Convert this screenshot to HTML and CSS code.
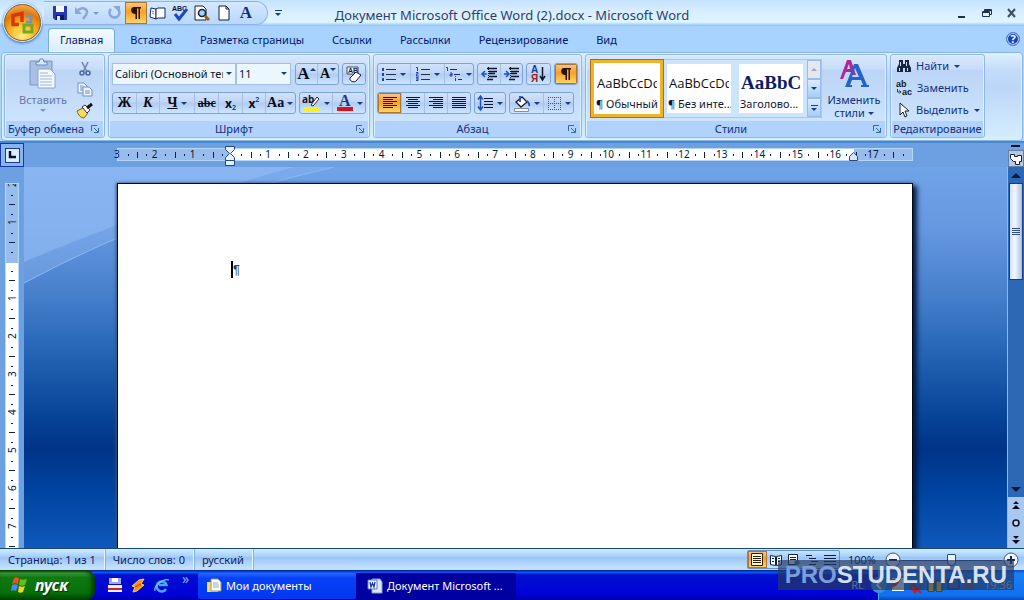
FILE: index.html
```html
<!DOCTYPE html>
<html lang="ru">
<head>
<meta charset="utf-8">
<title>Документ Microsoft Office Word (2).docx - Microsoft Word</title>
<link rel="stylesheet" href="styles.css">
</head>
<body>
<header class="titlebar">
  <div class="qat-area">
    <div class="qat">
      <button class="ib" aria-label="Сохранить"><svg width="16" height="16"><path d="M1 1h14v14H3l-2-2z" fill="#2a35b0"/><path d="M4 1h8v6H4z" fill="#f4f8ff"/><path d="M4 10h8v5H4z" fill="#101868"/><path d="M5 11h3v4H5z" fill="#dfe8fa"/></svg></button>
      <button class="ib" aria-label="Отменить"><svg width="16" height="16"><path d="M4 5c6-4 11 0 8 5l-3 4" fill="none" stroke="#8ba6d8" stroke-width="2.5"/><path d="M1 2v7h7z" fill="#8ba6d8"/></svg></button>
      <span class="caret pale"></span>
      <button class="ib" aria-label="Вернуть"><svg width="16" height="16"><path d="M12 4a5 5 0 1 1-7 0" fill="none" stroke="#8ba6d8" stroke-width="2.5"/><path d="M7 1h7v7z" fill="#8ba6d8"/></svg></button>
      <button class="ib on" aria-label="Непечатаемые знаки"><svg width="16" height="16"><path d="M6 2h7v1.500h-1V14h-1.500V3.500H9V14H7.500V9C2 9 2 2 6 2z" fill="#281400"/></svg></button>
      <button class="ib" aria-label="Режим чтения"><svg width="18" height="16"><path d="M2 3l5 1v10l-6-2z" fill="#fff" stroke="#182858"/><path d="M9 3h7v10H9l-2 1V4z" fill="#fff" stroke="#182858"/><path d="M3 6l2 1M3 8l2 1" stroke="#6880b0"/></svg></button>
      <button class="ib" aria-label="Орфография"><svg width="18" height="18"><text x="1" y="7" class="t-abc">ABC</text><path d="M4 10l4 5 8-10" fill="none" stroke="#1c48c8" stroke-width="3"/></svg></button>
      <button class="ib" aria-label="Просмотр"><svg width="18" height="16"><path d="M2 1h8l3 3v11H2z" fill="#fff" stroke="#182038"/><circle cx="9" cy="8" r="3.500" fill="#a8d0f0" stroke="#182038" stroke-width="1.500"/><path d="M12 11l4 4" stroke="#a06010" stroke-width="3"/></svg></button>
      <button class="ib" aria-label="Создать"><svg width="14" height="16"><path d="M2 1h7l3 3v11H2z" fill="#fff" stroke="#182038"/><path d="M9 1v3h3" fill="none" stroke="#182038"/></svg></button>
      <button class="ib glyph-a">A</button>
    </div>
    <button class="more" aria-label="Настройка панели"><span class="bar"></span><span class="caret"></span></button>
  </div>
  <h1 class="title">Документ Microsoft Office Word (2).docx - Microsoft Word</h1>
  <div class="winbtns">
    <button aria-label="Свернуть"><svg width="12" height="12"><path d="M2 9h7v2H2z" fill="#203050"/></svg></button>
    <button aria-label="Восстановить"><svg width="12" height="12"><path d="M3.500 4V2.500h7v5H9M1.500 4.500h7v5h-7zM1.500 5.500h7M3 3.500h7" fill="none" stroke="#203050"/></svg></button>
    <button aria-label="Закрыть"><svg width="12" height="12"><path d="M2 2l7 8M9 2l-7 8" stroke="#405068" stroke-width="2.200"/></svg></button>
  </div>
  <button class="office" aria-label="Office"><svg width="26" height="26"><path d="M12 12V3.500l-9 2v9h6" fill="none" stroke="#d83808" stroke-width="3.500"/><path d="M15 6h6v6h-5" fill="none" stroke="#7090c8" stroke-width="2.500"/><path d="M10 15v7H5v-4" fill="none" stroke="#f8d040" stroke-width="2.500"/><path d="M14 15h8v7h-8z" fill="none" stroke="#78a820" stroke-width="3"/></svg></button>
</header>
<nav class="tabs">
  <button class="tab active">Главная</button><button class="tab">Вставка</button><button class="tab">Разметка страницы</button><button class="tab">Ссылки</button><button class="tab">Рассылки</button><button class="tab">Рецензирование</button><button class="tab">Вид</button>
  <button class="help" aria-label="Справка">?</button>
</nav>
<div class="ribbon">
  <section class="group g-clip">
    <div class="body clip">
      <button class="big paste"><svg width="28" height="32"><path d="M1 3h22v24H1z" fill="#a8c0e4" stroke="#7898c8"/><path d="M7 4h3l1-3h3l1 3h3v3H7z" fill="#dce8fa" stroke="#6888b8"/><path d="M9 11h12l5 5v14H9z" fill="#f4f9ff" stroke="#88a4d0"/><path d="M11 15h8M11 18h12M11 21h12M11 24h12M11 27h12" stroke="#98b4dc"/></svg><span>Вставить</span><i class="caret pale"></i></button>
      <div class="col">
        <button class="ib" aria-label="Вырезать"><svg width="14" height="16"><path d="M4 1l5 10M10 1L5 11" stroke="#6f88b4" stroke-width="1.600"/><circle cx="4" cy="12" r="2" fill="none" stroke="#5068a0" stroke-width="1.600"/><circle cx="10" cy="12" r="2" fill="none" stroke="#5068a0" stroke-width="1.600"/></svg></button>
        <button class="ib" aria-label="Копировать"><svg width="16" height="15"><path d="M1 1h6l3 3v7H1z" fill="#eef5ff" stroke="#7090c0"/><path d="M3 4h3M3 6h3M3 8h3" stroke="#7090c0"/><path d="M6 5h6l3 3v6H6z" fill="#eef5ff" stroke="#7090c0"/><path d="M8 9h5M8 11h5" stroke="#7090c0"/></svg></button>
        <button class="ib" aria-label="Формат по образцу"><svg width="18" height="16"><path d="M1 8l6-3 5 5-4 5c-3 0-6-3-7-7z" fill="#f8dc58" stroke="#806010"/><path d="M6 4l3-2 5 5-3 3z" fill="#fff" stroke="#303040"/><path d="M11 5l5-4" stroke="#181818" stroke-width="3"/></svg></button>
      </div>
    </div>
    <footer><span>Буфер обмена</span><button class="launch" aria-label="Буфер обмена"><svg width="8" height="8"><path d="M.5 6V.5H6M7.500 3v4.500H3M3 3l4 4" fill="none" stroke="#3868a8"/></svg></button></footer>
  </section>

  <section class="group g-font">
    <div class="body rows">
      <div class="row">
        <div class="combos">
          <label class="combo name"><select aria-label="Шрифт"><option>Calibri (Основной текст)</option></select><i class="caret"></i></label>
          <label class="combo size"><select aria-label="Размер шрифта"><option>11</option></select><i class="caret"></i></label>
        </div>
        <div class="set"><button class="w22 serif s16" aria-label="Увеличить">A<i class="caret up sup"></i></button><button class="w22 serif s13" aria-label="Уменьшить">A<i class="caret sup"></i></button></div>
        <div class="set"><button class="w24" aria-label="Очистить формат"><svg width="18" height="17"><path d="M2 1h11v7H2z" fill="#fff" stroke="#384878"/><text x="3" y="7" class="t-aa">AB</text><path d="M5 12l6-6 5 3-5 6c-2 2-7 0-6-3z" fill="#fff" stroke="#182038"/></svg></button></div>
      </div>
      <div class="row">
        <div class="set"><button class="w22 serif">Ж</button><button class="w22 serif it">К</button><button class="w36 serif"><u>Ч</u><i class="caret"></i></button><button class="w24 serif s12"><s>abc</s></button><button class="w24 sansb">x<sub>2</sub></button><button class="w22 sansb">x<sup>2</sup></button><button class="w30 serif">Aa<i class="caret"></i></button></div>
        <div class="set"><button class="w33" aria-label="Выделение цветом"><svg width="19" height="18"><text x="0" y="9" class="t-ab">ab</text><path d="M9 11l6-8 2 2-6 7z" fill="#fff" stroke="#202838"/><path d="M1 13h16v4H1z" fill="#f8f020"/></svg><i class="caret"></i></button><button class="w33" aria-label="Цвет текста"><svg width="18" height="18"><text x="3" y="12" class="t-a">A</text><path d="M1 13h16v4H1z" fill="#d81020"/></svg><i class="caret"></i></button></div>
      </div>
    </div>
    <footer><span>Шрифт</span><button class="launch" aria-label="Шрифт"><svg width="8" height="8"><path d="M.5 6V.5H6M7.500 3v4.500H3M3 3l4 4" fill="none" stroke="#3868a8"/></svg></button></footer>
  </section>

  <section class="group g-para">
    <div class="body rows">
      <div class="row">
        <div class="set"><button class="w33" aria-label="Маркеры"><svg width="16" height="16"><path d="M5 3.500h10M5 8.500h10M5 13.500h10" stroke="#283048"/><path d="M1 2h2v3H1zM1 7h2v3H1zM1 12h2v3H1z" fill="#2440b0"/></svg><i class="caret"></i></button><button class="w34" aria-label="Нумерация"><svg width="16" height="16"><path d="M6 3.500h9M6 8.500h9M6 13.500h9" stroke="#283048"/><path d="M1 1.500h1.500V5M1 6.500h2v1.500H1.500V10H4M1 11.500h2v3H1M1 13h2" fill="none" stroke="#2440b0"/></svg><i class="caret"></i></button><button class="w30" aria-label="Многоуровневый список"><svg width="18" height="16"><path d="M5 3.500h7M9 8.500h6M13 13.500h4" stroke="#283048"/><path d="M1 1.500h1.500V5M5 7h2v3H5V8.500h2M10.500 10v1M10.500 12v3" fill="none" stroke="#2440b0"/></svg><i class="caret"></i></button></div>
        <div class="set"><button class="w22" aria-label="Уменьшить отступ"><svg width="17" height="16"><path d="M6 2.500h10M8 5.500h8M8 7.500h6M8 10.500h8M6 13.500h6" stroke="#10182c" stroke-width="1.300"/><path d="M1 8h5M4 5L1 8l3 3" fill="none" stroke="#2050c0" stroke-width="1.500"/><path d="M7.500 1v14" stroke="#10182c" stroke-dasharray="1"/></svg></button><button class="w22" aria-label="Увеличить отступ"><svg width="17" height="16"><path d="M6 2.500h10M8 5.500h8M8 7.500h6M8 10.500h8M6 13.500h6" stroke="#10182c" stroke-width="1.300"/><path d="M1 8h5M3 5l3 3-3 3" fill="none" stroke="#2050c0" stroke-width="1.500"/><path d="M7.500 1v14" stroke="#10182c" stroke-dasharray="1"/></svg></button></div>
        <div class="set"><button class="w22" aria-label="Сортировка"><svg width="16" height="18"><text x="0" y="8" class="t-sort blue">А</text><text x="0" y="17" class="t-sort red">Я</text><path d="M11.500 2v13M9 11l2.500 4 2.500-4" fill="none" stroke="#101828" stroke-width="1.500"/></svg></button></div>
        <div class="set"><button class="w22 on" aria-label="Отобразить все знаки"><svg width="16" height="16"><path d="M6 2h7v1.500h-1V14h-1.500V3.500H9V14H7.500V9C2 9 2 2 6 2z" fill="#281400"/></svg></button></div>
      </div>
      <div class="row">
        <div class="set"><button class="w22 on" aria-label="По левому краю"><svg width="16" height="14"><path d="M1 1.500h14M1 3.500h10M1 5.500h14M1 7.500h10M1 9.500h14M1 11.500h10" stroke="#301800"/></svg></button><button class="w22" aria-label="По центру"><svg width="16" height="14"><path d="M1 1.500h14M3 3.500h10M1 5.500h14M3 7.500h10M1 9.500h14M3 11.500h10" stroke="#10182c"/></svg></button><button class="w22" aria-label="По правому краю"><svg width="16" height="14"><path d="M1 1.500h14M5 3.500h10M1 5.500h14M5 7.500h10M1 9.500h14M5 11.500h10" stroke="#10182c"/></svg></button><button class="w22" aria-label="По ширине"><svg width="16" height="14"><path d="M1 1.500h14M1 3.500h14M1 5.500h14M1 7.500h14M1 9.500h14M1 11.500h14" stroke="#10182c"/></svg></button></div>
        <div class="set"><button class="w30" aria-label="Интервал"><svg width="17" height="16"><path d="M7 3.500h9M7 6.500h9M7 9.500h9M7 12.500h9" stroke="#10182c"/><path d="M3.500 2v12M1 4.500L3.500 1 6 4.500M1 11.500L3.500 15 6 11.500" fill="none" stroke="#2050c0" stroke-width="1.500"/></svg><i class="caret"></i></button></div>
        <div class="set"><button class="w33" aria-label="Заливка"><svg width="18" height="17"><path d="M3 7l6-5 5 5-6 5z" fill="#fff" stroke="#182038" stroke-width="1.300"/><path d="M7 1v6M14 6c2 2 3 3 2 5" fill="none" stroke="#2050c0" stroke-width="1.800"/><path d="M1.500 13.500h14v3h-14z" fill="#fff" stroke="#8090a8"/></svg><i class="caret"></i></button><button class="w30" aria-label="Границы"><svg width="15" height="15"><path d="M1.500 1v13M7.500 1v13M13.500 1v13M1 1.500h13M1 7.500h13M1 13.500h13" stroke="#405080" stroke-dasharray="1"/></svg><i class="caret"></i></button></div>
      </div>
    </div>
    <footer><span>Абзац</span><button class="launch" aria-label="Абзац"><svg width="8" height="8"><path d="M.5 6V.5H6M7.500 3v4.500H3M3 3l4 4" fill="none" stroke="#3868a8"/></svg></button></footer>
  </section>

  <section class="group g-styles">
    <div class="body styles">
      <div class="gallery">
        <button class="style sel"><span class="sample">AaBbCcDd</span><span class="sname">¶ Обычный</span></button>
        <button class="style"><span class="sample">AaBbCcDd</span><span class="sname">¶ Без инте...</span></button>
        <button class="style"><span class="sample head">AaBbCc</span><span class="sname">Заголово...</span></button>
        <div class="gscroll"><button aria-label="Вверх" class="off"><i class="caret up pale"></i></button><button aria-label="Вниз"><i class="caret"></i></button><button aria-label="Ещё"><span class="bar"></span><i class="caret"></i></button></div>
      </div>
      <button class="big change"><svg width="32" height="30"><path d="M2 20L9 1h4l5 15h-4l-1-3H8l-3 7zM9 10h3l-1-5z" fill="#b02898"/><path d="M7 28L16 5h4l9 21h2v2h-8v-2h2l-2-5h-9l-2 5h2v2zM14 18h7l-4-9z" fill="#2464c8"/></svg><span>Изменить</span><span>стили <i class="caret"></i></span></button>
    </div>
    <footer><span>Стили</span><button class="launch" aria-label="Стили"><svg width="8" height="8"><path d="M.5 6V.5H6M7.500 3v4.500H3M3 3l4 4" fill="none" stroke="#3868a8"/></svg></button></footer>
  </section>

  <section class="group g-edit">
    <div class="body edit">
      <button><svg width="16" height="16"><path d="M3 2h4v4h2V2h4v4l2 4v4H9v-4H7v4H1v-4l2-4z" fill="#182444"/><path d="M4 4h1v4H4zM10 4h1v4h-1zM3 10h1v3H3zM11 10h1v3h-1z" fill="#d4e4fa"/></svg>Найти<i class="caret"></i></button>
      <button><svg width="17" height="16"><text x="0" y="7" class="t-rep">ab</text><text x="6" y="15" class="t-rep">ac</text><path d="M1.500 9v3H5M3.500 10.500L5 12l-1.500 1.500" fill="none" stroke="#203878"/></svg>Заменить</button>
      <button><svg width="16" height="16"><path d="M4 1v12l3-3 2 5 2-1-2-5h4z" fill="#fff" stroke="#182038"/></svg>Выделить<i class="caret"></i></button>
    </div>
    <footer><span>Редактирование</span></footer>
  </section>
</div>

<main class="work">
  <div class="corner"><button class="tabstop" aria-label="Табуляция"><svg width="8" height="8"><path d="M2 0v6h6" fill="none" stroke="#081028" stroke-width="2.500"/></svg></button></div>
  <div class="htrack">
    <div class="hruler">
      <b>3</b><b>2</b><b>1</b><b></b><b>1</b><b>2</b><b>3</b><b>4</b><b>5</b><b>6</b><b>7</b><b>8</b><b>9</b><b class="d">10</b><b class="d">11</b><b class="d">12</b><b class="d">13</b><b class="d">14</b><b class="d">15</b><b class="d">16</b><b class="d">17</b>
      <svg class="ind left" width="10" height="22"><path d="M.5 .5h9v3l-4 4 4 4v3h-9v-3l4-4-4-4z" fill="#e4f0ff" stroke="#284880"/><path d="M.5 14.500h9v5h-9z" fill="#e4f0ff" stroke="#284880"/></svg>
      <svg class="ind right" width="10" height="10"><path d="M.5 8.500v-4l4-4 4 4v4z" fill="#d4e6ff" stroke="#284880"/></svg>
    </div>
  </div>
  <div class="rtop"><span class="split"></span><button aria-label="Линейка"><svg width="14" height="14"><path d="M1.500 2.500h4v2h3v-1h4v6h-2v3h-4v-3h-2l-3-3z" fill="#fff" stroke="#182038"/></svg></button></div>
  <div class="vtrack"><div class="vruler"><b>2</b><b>1</b><b></b><b>1</b><b>2</b><b>3</b><b>4</b><b>5</b><b>6</b><b>7</b></div></div>
  <div class="canvas">
    <svg class="curves" width="310" height="120"><path d="M0 0h310Q150 36 0 116z" fill="#88b4f0" fill-opacity=".45"/><path d="M0 0h270Q140 36 0 95z" fill="#98c0f8" fill-opacity=".5"/><path d="M0 116Q150 36 310 0" fill="none" stroke="#8cb8f0"/></svg>
    <article class="page"><p><span class="cursor"></span>¶</p></article>
  </div>
  <div class="vscroll">
    <button class="arrow" aria-label="Вверх"><i class="caret up big5"></i></button>
    <div class="thumb"><span></span><span></span><span></span><span></span></div>
    <button class="arrow down" aria-label="Вниз"><i class="caret big5"></i></button>
    <div class="nav">
      <button aria-label="Предыдущая страница"><svg width="8" height="10"><path d="M4 0l3 3H1zM4 4l4 4H0z" fill="#081028"/></svg></button>
      <button aria-label="Выбор объекта"><svg width="8" height="8"><circle cx="4" cy="4" r="3" fill="#c8d0d8" stroke="#081028" stroke-width="1.500"/></svg></button>
      <button aria-label="Следующая страница"><svg width="8" height="10"><path d="M1 1h6L4 4zM0 5h8L4 9z" fill="#081028"/></svg></button>
    </div>
  </div>
</main>

<div class="status">
  <span class="cell">Страница: 1 из 1</span><span class="cell">Число слов: 0</span><span class="cell">русский</span>
  <div class="views">
    <button class="on" aria-label="Разметка страницы"><svg width="12" height="13"><path d="M.5 .5h11v12H.5z" fill="#fff8e0" stroke="#302008"/><path d="M2 3.500h8M2 5.500h8M2 7.500h8M2 9.500h8" stroke="#302008"/></svg></button><button aria-label="Чтение"><svg width="12" height="12"><path d="M.5 1.500l5 1v9l-5-1zM11.500 1.500l-5 1v9l5-1z" fill="#fff" stroke="#102040"/><path d="M2 4.500h2M8 4.500h2M2 7.500h2M8 7.500h2" stroke="#102040"/></svg></button><button aria-label="Веб-документ"><svg width="12" height="12"><path d="M.5 .5h9v10h-9z" fill="#fff" stroke="#102040"/><path d="M2 3.500h6M2 5.500h6" stroke="#102040"/><circle cx="9" cy="8.500" r="2.500" fill="#407890"/></svg></button><button aria-label="Структура"><svg width="12" height="12"><path d="M0 1.500h6M3 4.500h7M5 7.500h7M3 10.500h7" stroke="#102040"/></svg></button><button aria-label="Черновик"><svg width="12" height="12"><path d="M0 1.500h12M0 4.500h12M0 7.500h12M0 10.500h12" stroke="#102040"/></svg></button>
  </div>
  <span class="pct">100%</span>
  <button class="zb" aria-label="Уменьшить"><svg width="16" height="16"><circle cx="8" cy="8" r="7" fill="#f0f6ff" stroke="#405878"/><path d="M4 8h8" stroke="#182848" stroke-width="2"/></svg></button>
  <input class="zoom" type="range" min="0" max="100" value="50" aria-label="Масштаб">
  <button class="zb" aria-label="Увеличить"><svg width="16" height="16"><circle cx="8" cy="8" r="7" fill="#f0f6ff" stroke="#405878"/><path d="M4 8h8M8 4v8" stroke="#182848" stroke-width="2"/></svg></button>
</div>

<div class="taskbar">
  <button class="start"><svg width="19" height="18"><path d="M4 2c2-1 3-1 5 0L8 8C6 7 4 7 2 8z" fill="#f05020"/><path d="M10 3c2 1 4 1 7 0l-2 6c-2 1-4 1-6 0z" fill="#60c020"/><path d="M2 9c2-1 4-1 6 0l-2 6c-2-1-3-1-5 0z" fill="#4888f8"/><path d="M9 10c2 1 4 1 6 0l-2 6c-2 1-3 1-5 0z" fill="#f8d020"/></svg>пуск</button>
  <div class="quick">
    <button aria-label="Дискета"><svg width="14" height="15"><path d="M1 0h12v6H1z" fill="#98a8e8"/><path d="M4 0h6v4H4z" fill="#fff"/><path d="M0 7h14v7H0z" fill="#f8f0f4"/><path d="M0 10h14v2H0z" fill="#c02830"/></svg></button>
    <button aria-label="Проигрыватель"><svg width="14" height="15"><path d="M13 1L8 2 1 8l3 1-2 5 4-1 7-6-3-1z" fill="#f89018" stroke="#ffc860"/><path d="M4 9l6-3" stroke="#a04800"/></svg></button>
    <button aria-label="Internet Explorer"><svg width="16" height="15"><path d="M12 11a5 5 0 1 1 .500-4H5" fill="none" stroke="#48a8f8" stroke-width="2.500"/><path d="M1 13C-1 9 9 0 15 2" fill="none" stroke="#78c8ff" stroke-width="1.300"/></svg></button>
    <span class="chev">»</span>
  </div>
  <button class="task"><svg width="16" height="16"><path d="M1 4h4l1-2h6v12H1z" fill="#f8d868"/><path d="M5 1h7l3 3v9H5z" fill="#fff" stroke="#a09858"/><path d="M7 5h5M7 7h6M7 9h6" stroke="#98a8c8"/></svg>Мои документы</button>
  <button class="task cur"><svg width="16" height="16"><path d="M5 1h8l2 3v11H5z" fill="#dce8fa" stroke="#88a0d0"/><path d="M1 2h9v9H1z" fill="#fff" stroke="#5878c8"/><path d="M3 4l1 5 1.500-4L7 9l1-5" fill="none" stroke="#1838a0" stroke-width="1.300"/></svg>Документ Microsoft ...</button>
  <div class="tray"><span class="lang">RL</span>
    <div class="trayicons">
      <svg width="105" height="18" viewBox="9 0 105 18"><circle cx="9" cy="9" r="8" fill="#4090d8"/><path d="M11 5L7 9l4 4" fill="none" stroke="#fff" stroke-width="2"/><path d="M22 2h12v13H22z" fill="#fff"/><path d="M22 3h9l-4 6-5 3z" fill="#e02818"/><path d="M40 12l5-4v8zM44 10l7 7M51 10l-7 7" stroke="#d01820" stroke-width="2" fill="#6080c0"/><path d="M58 5h6v10h-6zM66 5h6v10h-6z" fill="#f0d048" stroke="#182038"/><path d="M78 3h11v10H78z" fill="#3868c8" stroke="#101840"/><circle cx="99" cy="9" r="5" fill="#685868"/></svg>
    </div>
    <span class="clock">19:36</span></div>
</div>
<div class="mark"><span>PRO</span>STUDENTA.RU</div>
</body>
</html>
```

FILE: styles.css
```css
* { box-sizing: border-box; }
body { margin: 0; height: 100vh; display: flex; flex-direction: column; overflow: hidden; position: relative; background: #b0d4ff; color: #10206c; font: 11px/14px "Noto Sans", "Open Sans", sans-serif; }
button { border: 0; padding: 0; background: none; color: inherit; font: inherit; display: flex; align-items: center; justify-content: center; white-space: nowrap; }
svg { display: block; flex: none; overflow: visible; }
.caret { display: inline-block; flex: none; border: 3px solid transparent; border-top-color: #183c80; border-bottom: 0; width: 0; height: 0; }
.caret.up { border: 3px solid transparent; border-bottom-color: #183c80; border-top: 0; }
.caret.pale { border-top-color: #8098c0; }
.caret.up.pale { border-bottom-color: #a0a8b8; border-top-color: transparent; }
.caret.big5 { border-left-width: 5px; border-right-width: 5px; border-top-width: 5px; border-top-color: #081848; }
.caret.up.big5 { border-top-width: 0; border-bottom-width: 5px; border-bottom-color: #081848; }
.bar { width: 7px; height: 1px; background: #183c80; }
.on { background: linear-gradient(#f8c888, #f8a028 45%, #ffd870); box-shadow: inset 0 0 0 1px #a87830; }

.titlebar { position: relative; z-index: 2; flex: none; height: 26px; display: grid; grid-template-columns: 1fr auto 1fr; align-items: center; background: linear-gradient(#c4e2ff, #d8ecff 40%, #dcf6ff 85%, #90c0f0); }
.qat-area { display: flex; align-items: center; gap: 6px; padding-left: 44px; }
.qat { display: flex; align-items: center; height: 24px; padding: 0 10px 0 5px; border: 1px solid #90b4e0; border-left: 0; border-radius: 0 12px 12px 0; background: linear-gradient(#d4e8ff, #b8d8fc); }
.ib { width: 22px; height: 22px; }
.qat .caret { margin: 0 4px 0 0; }
.glyph-a { font: bold 17px "Liberation Serif", serif; color: #102c88; }
.more { flex-direction: column; gap: 2px; width: 8px; }
.title { margin: 0; font-size: 13px; line-height: 16px; font-weight: 400; color: #303c70; padding-top: 3px; white-space: nowrap; }
.winbtns { display: flex; justify-content: flex-end; gap: 13px; padding-right: 6px; }
.office { position: absolute; left: 4px; top: 4px; width: 37px; height: 37px; border-radius: 50%; background: radial-gradient(circle at 50% 90%, #fff080, #f8b020 40%, #e07808 65%, #f8c880); border: 1px solid #886020; box-shadow: 0 0 0 1px #d8ecff, 0 1px 3px 1px #4060a0; }

.tabs { flex: none; height: 26px; display: flex; padding: 2px 4px 0 48px; background: #a8d2ff; }
.tab { padding: 0 13px 1px; border: 1px solid transparent; border-bottom: 0; color: #001870; }
.tab.active { padding: 0 11px 1px; margin-right: 1px; border-color: #78acdc; border-radius: 4px 4px 0 0; background: linear-gradient(#f4fcff, #d8ecff); box-shadow: inset 0 0 0 1px #dcffff; }
.help { margin: 4px 0 0 auto; width: 14px; height: 14px; border-radius: 50%; background: #1844c0; color: #fff; font-weight: 700; border: 1px solid #5880c8; box-shadow: inset 0 0 0 1px #c8dcff; }

.ribbon { flex: none; display: flex; gap: 3px; height: 89px; margin: 0 1px; padding: 1px 3px 2px 2px; border: 1px solid #88b4e8; border-radius: 4px; background: linear-gradient(#dcf0ff, #c4dcfa 20%, #bcd6f8 40%, #d4eeff); box-shadow: inset 0 0 0 1px #d4f4ff; }
.group { display: flex; flex-direction: column; border: 1px solid #90b8e4; border-radius: 3px; box-shadow: inset 0 0 0 1px #d8f0ff; background: linear-gradient(#d8e8fc, #c8dcf8 17%, #bcd4f6 19%, #d0e8ff); overflow: hidden; }
.body { flex: 1; min-height: 0; }
.group footer { height: 16px; flex: none; display: flex; align-items: center; background: #b0d2fc; color: #103080; padding: 0 4px 0 2px; margin: 0 1px; }
.group footer span { flex: 1; text-align: center; white-space: nowrap; }
.g-clip { width: 101px; }
.g-clip footer span { text-align: left; }
.g-font { width: 262px; }
.g-para { width: 209px; }
.g-styles { width: 302px; }
.g-edit { width: 95px; }
.g-edit footer { padding: 0; }
.clip { display: flex; padding: 3px 8px 0 14px; justify-content: space-between; }
.big { flex-direction: column; justify-content: flex-start; }
.paste { color: #6878a0; gap: 2px; }
.paste svg { margin-bottom: 1px; }
.col { display: flex; flex-direction: column; }
.rows { padding: 8px 3px 0; display: flex; flex-direction: column; gap: 7px; }
.row { display: flex; gap: 3px; height: 22px; }
.set { display: flex; border: 1px solid #7ca4d8; border-radius: 3px; background: linear-gradient(#d0e2fa, #c0d6f6 45%, #b0ccf2 50%, #cce4ff); overflow: hidden; }
.set button { gap: 3px; border-left: 1px solid #a4c0e4; color: #080c18; }
.set button:first-child { border-left: 0; }
.w22 { width: 23px; } .w24 { width: 24px; } .w30 { width: 30px; } .w33 { width: 33px; } .w34 { width: 35px; } .w36 { width: 36px; }
.serif { font: bold 14px "Liberation Serif", serif; }
.s16 { font-size: 17px; } .s13 { font-size: 14px; } .s12 { font-size: 12px; }
.it { font-style: italic; }
.sansb { font: bold 12px "Noto Sans", sans-serif; }
.set .sansb { gap: 0; }
.sansb sub, .sansb sup { font-size: 7px; line-height: 7px; color: #1840a0; }
.sansb sub { align-self: flex-end; padding-bottom: 2px; } .sansb sup { align-self: flex-start; padding-top: 3px; }
.set .s16, .set .s13 { gap: 0; }
.sup { align-self: flex-start; margin-top: 4px; }
.combos { display: flex; margin-right: 1px; }
.combo { position: relative; display: flex; }
.combo select { appearance: none; width: 100%; height: 22px; border: 1px solid #a4c0e4; border-radius: 0; background: #ecf6ff; font: inherit; color: #101830; padding: 0 12px 0 2px; text-overflow: clip; }
.combo .caret { position: absolute; right: 4px; top: 9px; }
.name { width: 124px; } .size { width: 55px; }
.t-abc, .t-aa { font: bold 7px "Liberation Sans", sans-serif; fill: #101838; }
.t-ab { font: bold 10px "Noto Sans", sans-serif; fill: #101838; }
.t-a { font: bold 16px "Liberation Serif", serif; fill: #183890; }
.t-sort { font: bold 10px "Liberation Sans", sans-serif; }
.blue { fill: #1838a0; } .red { fill: #a02020; }
.t-rep { font: bold 9px "Liberation Sans", sans-serif; fill: #102018; }

.styles { display: flex; gap: 4px; padding: 4px 4px 0; }
.gallery { display: flex; height: 59px; flex: none; padding: 0; background: #cce4fc; border: 1px solid #a8c8ec; }
.style { flex-direction: column; width: 64px; height: 49px; margin: 4px 4px; background: #fff; color: #101838; overflow: hidden; align-items: flex-start; justify-content: flex-end; padding: 0 1px 2px; }
.style + .style { margin-left: 4px; }
.style.sel { width: 72px; height: 57px; margin: 0; border: 3px solid #f0b428; outline: 1px solid #a87018; padding: 0 1px 3px 2px; }
.sample { font: 13px/20px "Open Sans", sans-serif; color: #101010; width: 60px; overflow: hidden; text-align: left; margin: 0 0 3px 1px; }
.sample.head { font: bold 19px/20px "Liberation Serif", serif; color: #0c1c68; }
.sname { line-height: 15px; }
.gscroll { display: grid; grid-template-rows: 1fr 1fr 1fr; width: 14px; margin-left: auto; }
.gscroll button { flex-direction: column; gap: 2px; border: 1px solid #98bce8; background: linear-gradient(#d8ecff, #a8ccf8); }
.gscroll .off { background: #e4e8ee; }
.change { flex: 1; color: #103080; line-height: 13px; }
.change svg { margin-bottom: 4px; }
.change .caret { vertical-align: 2px; }
.edit { display: flex; flex-direction: column; align-items: flex-start; padding: 0 5px; }
.edit button { height: 22px; gap: 4px; color: #103080; }
.edit .caret { margin-left: 1px; }

.work { flex: 1; min-height: 0; display: grid; grid-template-columns: 24px 1fr 17px; grid-template-rows: 24px 1fr; border-top: 2px solid #4888cc; background: #6ca0e0; }
.corner { display: flex; align-items: center; justify-content: center; border: 1px solid #1838a0; background: #88b4f0; }
.tabstop { width: 15px; height: 15px; border: 1px solid #1838a0; background: #dcecff; }
.htrack { display: flex; justify-content: center; align-items: flex-start; padding: 5px 1px 0 0; }
.hruler { position: relative; width: 796px; height: 13px; display: flex; border: 1px solid #b4d8fc; background: linear-gradient(90deg, #98bcec 112px, #fff 112px calc(100% - 58px), #98bcec calc(100% - 58px)); }
.hruler b { flex: 1 1 0; min-width: 0; line-height: 11px; font-weight: 400; font-size: 10px; color: #081838; background: linear-gradient(#102048, #102048) 37% 5px / 1px 2px no-repeat, linear-gradient(#102048, #102048) 63% 3px / 1px 6px no-repeat, linear-gradient(#102048, #102048) 88% 5px / 1px 2px no-repeat; }
.hruler b:first-child { margin-left: -4px; }
.hruler b:nth-last-of-type(1) { margin-right: 4px; }
.hruler .d { text-indent: -3px; }
.ind { position: absolute; }
.ind.left { left: 107px; top: -3px; }
.ind.right { right: 53px; top: 3px; }
.rtop { display: flex; flex-direction: column; align-items: center; gap: 3px; padding-top: 2px; }
.split { width: 9px; height: 2px; background: #081028; }
.rtop button { width: 16px; height: 17px; border: 1px solid #6080a8; background: #b8c8e0; }
.vtrack { padding: 16px 5px 0; overflow: hidden; min-height: 0; }
.vruler { height: 100%; display: flex; flex-direction: column; overflow: hidden; border: 1px solid #b4d8fc; border-width: 1px 1px 0; background: linear-gradient(#98bcec 79px, #fff 79px); }
.vruler b { flex: none; height: 38px; writing-mode: vertical-rl; transform: rotate(180deg); text-align: end; font-weight: 400; font-size: 10px; line-height: 12px; color: #081838; background: linear-gradient(#102048, #102048) 5px 63% / 2px 1px no-repeat, linear-gradient(#102048, #102048) 3px 37% / 6px 1px no-repeat, linear-gradient(#102048, #102048) 5px 12% / 2px 1px no-repeat; }
.vruler b:first-child { margin-top: -3px; }
.canvas { position: relative; overflow: hidden; min-height: 0; padding: 16px 1px 0 0; background: linear-gradient(#70a4e8, #6498e0 16%, #4880cc 33%, #2868b8 47%, #084498 65%, #003488 74%, #0044a0 85%, #1058bc); }
.curves { position: absolute; left: 0; top: 0; }
.page { position: relative; width: 796px; max-width: 100%; height: 100%; margin: 0 auto; padding: 77px 113px; background: #fff; border: 1px solid #000818; border-bottom: 0; box-shadow: 4px 3px 5px #04183c, -1px 0 3px #385880; color: #283838; }
.page p { margin: 0; display: flex; font: 13px/18px "Liberation Sans", sans-serif; }
.cursor { width: 2px; height: 17px; background: #000; }
.vscroll { display: flex; flex-direction: column; min-height: 0; background: #2c68b4; border-left: 1px solid #90b8e8; }
.arrow { height: 16px; flex: none; }
.arrow.down { margin-top: auto; }
.thumb { height: 97px; margin: 0 1px; border: 1px solid #183c80; background: linear-gradient(90deg, #d0e0f8, #f4f8ff 40%, #a8c0e4); display: flex; flex-direction: column; align-items: center; justify-content: center; gap: 1px; }
.thumb span { width: 8px; height: 1px; background: #304c80; }
.nav { display: flex; flex-direction: column; height: 51px; background: #a8c8f0; }
.nav button { flex: 1; }

.status { flex: none; height: 22px; display: flex; align-items: center; border-top: 1px solid #184878; background: linear-gradient(#d0ecff, #a8d0fc 35%, #98c4f8 40%, #c4e0ff 90%); color: #102058; }
.cell { padding: 0 8px; line-height: 21px; border-right: 1px solid #e8f8ff; box-shadow: 1px 0 #88b0dc; }
.views { margin-left: auto; display: flex; border: 1px solid #6890c8; border-radius: 2px; height: 19px; }
.views button { width: 18px; }
.views .on { width: 19px; }
.pct { margin: 0 8px; }
.zb { width: 17px; flex: none; }
.zoom { appearance: none; width: 101px; height: 16px; margin: 0; background: linear-gradient(#385c90, #385c90) 0 8px / 100% 1px no-repeat; }
.zoom::-webkit-slider-thumb { appearance: none; width: 9px; height: 12px; border: 1px solid #284878; border-radius: 1px 1px 4px 4px; background: #e8f2ff; }
.status .zb:last-child { margin-right: 5px; }
.taskbar { flex: none; height: 30px; display: flex; background: linear-gradient(#001c98, #1058f0 8%, #0010d0 16%, #0000d8 85%, #0000a0); color: #fff; }
.start { width: 95px; justify-content: flex-start; padding-left: 10px; gap: 6px; border-radius: 0 9px 9px 0; background: linear-gradient(#003800, #389838 10%, #107810 25%, #087008 75%, #004800); box-shadow: inset -3px 0 4px #003800; font: italic bold 16px/20px "Noto Sans", sans-serif; text-shadow: 1px 1px 1px #003000; }
.quick { display: flex; align-items: center; gap: 9px; padding-left: 13px; width: 103px; flex: none; }
.chev { align-self: flex-start; padding-top: 2px; margin-left: 3px; color: #90b0ff; font-size: 14px; }
.task { width: 158px; margin: 3px 0 1px; justify-content: flex-start; gap: 4px; padding-left: 8px; border-radius: 2px; background: linear-gradient(#2868ff, #0840f8 20%, #0038f0); }
.task.cur { padding-left: 11px; width: 160px; background: #0000a0; }
.tray { margin-left: auto; display: flex; align-items: center; color: #c8dcff; }
.lang { padding-right: 14px; }
.trayicons { display: flex; align-items: center; height: 30px; background: linear-gradient(#1848c8, #1880f8 12%, #1070f0 85%, #0848b8); border-left: 1px solid #48a8ff; }
.clock { line-height: 30px; background: linear-gradient(#1848c8, #1880f8 12%, #1070f0 85%, #0848b8); padding: 0 12px 0 0; }
.mark { position: absolute; right: 10px; bottom: 10px; padding: 0 7px; background: rgba(36, 58, 100, .7); color: rgba(232, 240, 252, .92); font: bold 24px/30px "Liberation Sans", sans-serif; z-index: 5; }
.mark span { color: #7c9cdc; }
```
